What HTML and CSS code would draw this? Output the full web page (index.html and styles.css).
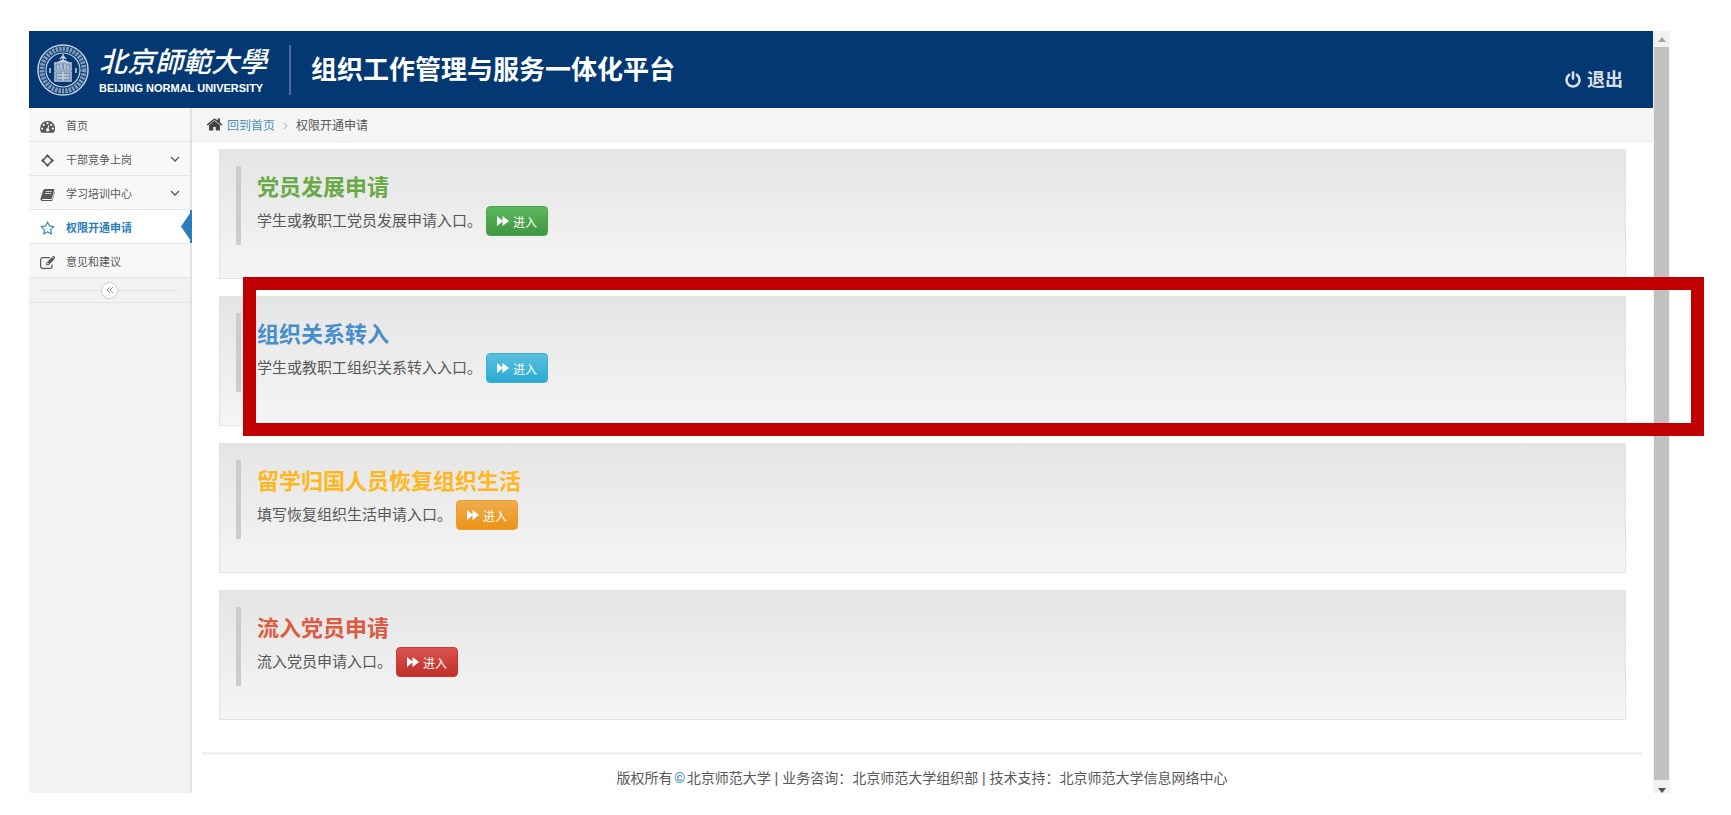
FILE: index.html
```html
<!DOCTYPE html>
<html lang="zh-CN">
<head>
<meta charset="utf-8">
<title>组织工作管理与服务一体化平台</title>
<link rel="stylesheet" href="styles.css">
</head>
<body>
<svg class="defs" aria-hidden="true">
  <symbol id="forward" viewBox="0 0 12 12"><path d="M0 1l5.500 4.600V1L12 6l-6.500 5V6.400L0 11z"/></symbol>
  <symbol id="chevron" viewBox="0 0 10 6"><path d="M1 1l4 4 4-4" fill="none" stroke="currentColor" stroke-width="1.300"/></symbol>
</svg>
<div class="window">
  <div class="page">
    <header class="header">
      <svg class="seal" viewBox="0 0 52 52" fill="none" stroke="currentColor" aria-hidden="true">
        <circle cx="26" cy="26" r="25" stroke-width="1.500"/>
        <circle cx="26" cy="26" r="21" stroke-width="5" stroke-dasharray="2.500 1" opacity=".65"/>
        <circle cx="26" cy="26" r="17" stroke-width="1.200"/>
        <path d="M26 10v8M23 15l3-3 3 3M20 19l6-3 6 3M18 19h16v7H18zM18 28h16v9H18zM21 21v4M24 20v5M28 20v5M31 21v4M20 31h12M20 34h12M26 28v9M13 24v5M39 24v5" stroke-width="1.500"/>
        <path d="M19 20h14v5H19zM19 29h14v7H19z" fill="currentColor" stroke="none" opacity=".6"/>
      </svg>
      <div class="school">
        <span class="school-cn">北京師範大學</span>
        <span class="school-en">BEIJING NORMAL UNIVERSITY</span>
      </div>
      <h1 class="platform">组织工作管理与服务一体化平台</h1>
      <a class="logout" href="#">
        <svg viewBox="0 0 1792 1792" fill="currentColor" aria-hidden="true"><path d="M1664 896q0 156-61 298t-164 245-245 164-298 61-298-61-245-164-164-245-61-298q0-182 80.500-343t226.500-270q43-32 95.500-25t83.500 50q32 42 24.500 94.500t-49.500 84.500q-98 74-151.500 181t-53.500 228q0 104 40.500 198.500t109.500 163.500 163.500 109.500 198.500 40.500 198.500-40.500 163.500-109.500 109.500-163.500 40.500-198.500q0-121-53.500-228t-151.500-181q-42-32-49.500-84.500t24.500-94.500q31-43 84-50t95 25q146 109 226.500 270t80.500 343zm-640-768v640q0 52-38 90t-90 38-90-38-38-90v-640q0-52 38-90t90-38 90 38 38 90z"/></svg>
        <span>退出</span>
      </a>
    </header>
    <div class="body">
      <nav class="sidebar">
        <a class="item" href="#">
          <svg viewBox="0 0 16 16" aria-hidden="true"><path fill="currentColor" fill-rule="evenodd" d="M8 2a8 8 0 0 0-8 8c0 1.600.4 3 1.200 4.300.2.300.4.400.7.400h12.200c.3 0 .5-.1.700-.4A8 8 0 0 0 8 2zM2.300 9a1.200 1.200 0 1 1 0 2.400 1.200 1.200 0 0 1 0-2.400zM4 5a1.200 1.200 0 1 1 0 2.400A1.200 1.200 0 0 1 4 5zm4-1.700a1.200 1.200 0 1 1 0 2.400 1.200 1.200 0 0 1 0-2.400zM12 5a1.200 1.200 0 1 1 0 2.400A1.200 1.200 0 0 1 12 5zm1.700 4a1.200 1.200 0 1 1 0 2.400 1.200 1.200 0 0 1 0-2.400zM8.800 6.500l1 .3-.8 3.200a1.800 1.800 0 1 1-1-.2z"/></svg>
          <span class="label">首页</span>
        </a>
        <a class="item" href="#">
          <svg viewBox="0 0 16 16" aria-hidden="true"><path fill="currentColor" d="M8 1l2.800 3.200H5.200zM8 15l2.800-3.200H5.200zM1 8l3.200-2.800v5.600zM15 8l-3.200-2.800v5.600z"/><path fill="none" stroke="currentColor" stroke-width="1.500" d="M8 3l5 5-5 5-5-5z"/></svg>
          <span class="label">干部竞争上岗</span>
          <svg class="chevron" aria-hidden="true"><use href="#chevron"/></svg>
        </a>
        <a class="item" href="#">
          <svg viewBox="0 0 16 16" aria-hidden="true"><path fill="currentColor" fill-rule="evenodd" d="M5.500 2h9c.7 0 1 .6.800 1.200L12.700 12c-.2.600-.6.900-1.200.9H2.800c-.6 0-.8.700.1.900h9.200c.5 0 .8-.3 1-.8L15.600 5c.3.300.4.700.2 1.200l-2.500 7.900c-.2.600-.7.900-1.300.9H2.600C1 15 .1 13.600.6 12.300L3.400 3.800C3.800 2.600 4.400 2 5.500 2zm.8 2.200-.3.900h6.300l.3-.9zm-.7 2.200-.3.900h6.300l.3-.9z"/></svg>
          <span class="label">学习培训中心</span>
          <svg class="chevron" aria-hidden="true"><use href="#chevron"/></svg>
        </a>
        <a class="item active" href="#" aria-current="page">
          <svg viewBox="0 0 1792 1792" aria-hidden="true"><path fill="currentColor" d="M1201 1004l306-297-422-62-189-382-189 382-422 62 306 297-73 421 378-199 377 199zm527-357q0 22-26 48l-363 354 86 500q1 7 1 20 0 50-41 50-19 0-40-12l-449-236-449 236q-22 12-40 12-21 0-31.500-14.500t-10.500-35.500q0-6 2-20l86-500-364-354q-25-27-25-48 0-37 56-46l502-73 225-455q19-41 49-41t49 41l225 455 502 73q56 9 56 46z"/></svg>
          <span class="label">权限开通申请</span>
        </a>
        <a class="item" href="#">
          <svg viewBox="0 0 16 16" aria-hidden="true"><path fill="none" stroke="currentColor" stroke-width="1.300" d="M10.500 2.700H3A2.300 2.300 0 0 0 .7 5v7A2.300 2.300 0 0 0 3 14.300h7.500a2.300 2.300 0 0 0 2.300-2.300v-2"/><path fill="currentColor" fill-rule="evenodd" d="M12.800 2.200l2.500 2.500-6.200 6.200H6.600V8.400zM15.700 4.300l-2.500-2.500.7-.7c.3-.3.700-.3 1 0l1.500 1.500c.3.300.3.700 0 1zM7.600 8.900v1h1l.8-.8-1-1z"/></svg>
          <span class="label">意见和建议</span>
        </a>
        <div class="collapse">
          <button type="button" aria-label="收起菜单"><svg viewBox="0 0 8 8" fill="none" stroke="currentColor" aria-hidden="true"><path d="M4 1L1 4l3 3M7 1L4 4l3 3"/></svg></button>
        </div>
      </nav>
      <div class="main">
        <nav class="crumbs">
          <svg class="home" viewBox="0 0 1792 1792" aria-hidden="true"><path fill="currentColor" d="M1472 992v480q0 26-19 45t-45 19h-384v-384h-256v384h-384q-26 0-45-19t-19-45v-480q0-1 .5-3t.5-3l575-474 575 474q1 2 1 6zm223-69l-62 74q-8 9-21 11h-3q-13 0-21-7l-692-577-692 577q-12 8-24 7-13-2-21-11l-62-74q-8-10-7-23.500t11-21.500l719-599q32-26 76-26t76 26l244 204v-195q0-14 9-23t23-9h192q14 0 23 9t9 23v408l219 182q10 8 11 21.500t-7 23.500z"/></svg>
          <a href="#">回到首页</a>
          <svg class="sep" viewBox="0 0 6 8" fill="none" stroke="currentColor" aria-hidden="true"><path d="M1 1l3 3-3 3"/></svg>
          <span>权限开通申请</span>
        </nav>
        <main class="cards">
          <section class="card">
            <div class="quote">
              <h2 class="green">党员发展申请</h2>
              <p>学生或教职工党员发展申请入口。<button class="btn btn-green" type="button"><svg aria-hidden="true"><use href="#forward"/></svg>进入</button></p>
            </div>
          </section>
          <section class="card marked">
            <div class="quote">
              <h2 class="blue">组织关系转入</h2>
              <p>学生或教职工组织关系转入入口。<button class="btn btn-blue" type="button"><svg aria-hidden="true"><use href="#forward"/></svg>进入</button></p>
            </div>
          </section>
          <section class="card">
            <div class="quote">
              <h2 class="orange">留学归国人员恢复组织生活</h2>
              <p>填写恢复组织生活申请入口。<button class="btn btn-orange" type="button"><svg aria-hidden="true"><use href="#forward"/></svg>进入</button></p>
            </div>
          </section>
          <section class="card">
            <div class="quote">
              <h2 class="red">流入党员申请</h2>
              <p>流入党员申请入口。<button class="btn btn-red" type="button"><svg aria-hidden="true"><use href="#forward"/></svg>进入</button></p>
            </div>
          </section>
        </main>
        <footer class="footer">版权所有<b>©</b>北京师范大学 | 业务咨询：北京师范大学组织部 | 技术支持：北京师范大学信息网络中心</footer>
      </div>
    </div>
  </div>
  <div class="scrollbar" aria-hidden="true">
    <svg class="up" viewBox="0 0 8 5"><path d="M0 5l4-5 4 5z"/></svg>
    <div class="thumb"></div>
    <svg class="down" viewBox="0 0 8 5"><path d="M0 0l4 5 4-5z"/></svg>
  </div>
</div>
</body>
</html>
```
FILE: styles.css
```css
* {
  box-sizing: border-box;
}

body {
  margin: 0;
  min-height: 100vh;
  padding: 31px 61px 22px 29px;
  display: flex;
  background: #fff;
  color: #585858;
  font-family: "Liberation Sans", "Noto Sans CJK SC", sans-serif;
  font-size: 12px;
}

a {
  color: inherit;
  text-decoration: none;
}

h1, h2, p {
  margin: 0;
}

.defs {
  position: absolute;
  width: 0;
  height: 0;
}

.window {
  flex: 1;
  display: flex;
}

.page {
  flex: 1;
  display: flex;
  flex-direction: column;
}

/* Header */
.header {
  height: 77px;
  padding: 0 30px 0 8px;
  display: flex;
  align-items: center;
  background: #043873;
  color: #fff;
}

.seal {
  width: 52px;
  height: 52px;
  color: #c3d0e0;
}

.school {
  margin-left: 10px;
  width: 176px;
  display: flex;
  flex-direction: column;
}

.school-cn {
  font-size: 28px;
  line-height: 36px;
  font-style: italic;
  font-weight: 500;
  white-space: nowrap;
}

.school-en {
  font-size: 11px;
  line-height: 14px;
  font-weight: bold;
  white-space: nowrap;
}

.platform {
  margin-left: 14px;
  padding-left: 20px;
  border-left: 2px solid #4a6f9b;
  font-size: 26px;
  line-height: 50px;
  font-weight: bold;
  white-space: nowrap;
}

.logout {
  margin-left: auto;
  padding-top: 20px;
  display: flex;
  align-items: center;
  gap: 5px;
  color: #d9dde2;
  font-size: 18px;
  line-height: 24px;
  font-weight: bold;
}

.logout svg {
  width: 18px;
  height: 18px;
}

.body {
  flex: 1;
  display: flex;
}

/* Sidebar */
.sidebar {
  width: 163px;
  border-right: 2px solid #e2e2e2;
  background: #f2f2f2;
}

.item {
  position: relative;
  height: 34px;
  padding: 0 10px 0 11px;
  display: flex;
  align-items: center;
  gap: 11px;
  border-bottom: 1px solid #e5e5e5;
  background: #f8f8f8;
  font-size: 11px;
}

.item > svg:first-child {
  width: 15px;
  height: 15px;
  margin-top: 4px;
}

.item .chevron {
  width: 10px;
  height: 6px;
  margin-left: auto;
}

.active {
  background: #fff;
  color: #2b7dbc;
  font-weight: bold;
}

.active::before,
.active::after {
  content: "";
  position: absolute;
  top: 0;
  bottom: 0;
  right: -2px;
  width: 2px;
  background: #2b7dbc;
}

.active::before {
  right: 0;
  width: 9px;
  clip-path: polygon(100% 10%, 0 50%, 100% 90%);
}

.collapse {
  height: 25px;
  padding: 0 12px;
  display: flex;
  align-items: center;
  border-bottom: 1px solid #e2e2e2;
}

.collapse::before,
.collapse::after {
  content: "";
  flex: 1;
  height: 1px;
  background: #e0e0e0;
}

.collapse button {
  width: 17px;
  height: 17px;
  padding: 0;
  display: flex;
  align-items: center;
  justify-content: center;
  border: 1px solid #ccc;
  border-radius: 50%;
  background: #fff;
  color: #999;
}

.collapse svg {
  width: 8px;
  height: 8px;
}

/* Content */
.main {
  flex: 1;
  display: flex;
  flex-direction: column;
}

.crumbs {
  height: 34px;
  padding: 0 14px;
  display: flex;
  align-items: center;
  border-bottom: 1px solid #e8e8e8;
  background: #f5f5f5;
}

.crumbs a {
  color: #4c8fbd;
}

.home {
  width: 17px;
  height: 17px;
  margin-right: 4px;
  color: #444;
}

.sep {
  width: 6px;
  height: 8px;
  margin: 2px 7px 0 8px;
  color: #aaa;
}

.cards {
  padding: 7px 27px 0;
  display: flex;
  flex-direction: column;
  gap: 17px;
}

.card {
  position: relative;
  min-height: 130px;
  padding: 16px;
  border: 1px solid #e3e3e3;
  background: linear-gradient(#e5e5e5, #f5f5f5);
}

/* Highlight frame around the selected entry */
.marked::after {
  content: "";
  position: absolute;
  top: -20px;
  right: -79px;
  bottom: -11px;
  left: 23px;
  border: 13px solid #c00000;
  pointer-events: none;
}

.quote {
  height: 79px;
  padding: 6px 0 0 16px;
  border-left: 5px solid #ccc;
}

.quote h2 {
  font-size: 22px;
  line-height: 32px;
  font-weight: bold;
}

.quote p {
  display: flex;
  align-items: center;
  gap: 4px;
  font-size: 15px;
  line-height: 34px;
}

.green { color: #69aa46; }
.blue { color: #478fca; }
.orange { color: #ffb71c; }
.red { color: #dd5a43; }

.btn {
  width: 62px;
  height: 30px;
  margin: 0;
  padding: 0;
  display: flex;
  align-items: center;
  justify-content: center;
  gap: 4px;
  border: 1px solid;
  border-radius: 4px;
  color: #fff;
  font-family: inherit;
  font-size: 12px;
}

.btn svg {
  width: 12px;
  height: 12px;
  fill: #fff;
}

.btn-green { background: linear-gradient(#5cb85c, #419641); border-color: #4aa24a; }
.btn-blue { background: linear-gradient(#5bc0de, #2aabd2); border-color: #38b0d5; }
.btn-orange { background: linear-gradient(#f0ad4e, #eb9316); border-color: #eb9c2d; }
.btn-red { background: linear-gradient(#d9534f, #c12e2a); border-color: #c73a36; }

.footer {
  margin: 32px 11px 0 10px;
  padding-top: 11px;
  border-top: 3px solid #f0f0f0;
  font-size: 14px;
  line-height: 24px;
  text-align: center;
}

.footer b {
  margin: 0 2px;
  color: #478fca;
}

/* Scrollbar */
.scrollbar {
  width: 17px;
  display: flex;
  flex-direction: column;
  align-items: center;
  background: #f1f1f1;
}

.scrollbar svg {
  width: 8px;
  height: 5px;
}

.up {
  margin: 6px 0 5px;
  fill: #a3a3a3;
}

.thumb {
  flex: 1;
  width: 15px;
  background: #c1c1c1;
}

.down {
  margin: 8px 0 0;
  fill: #505050;
}
```
